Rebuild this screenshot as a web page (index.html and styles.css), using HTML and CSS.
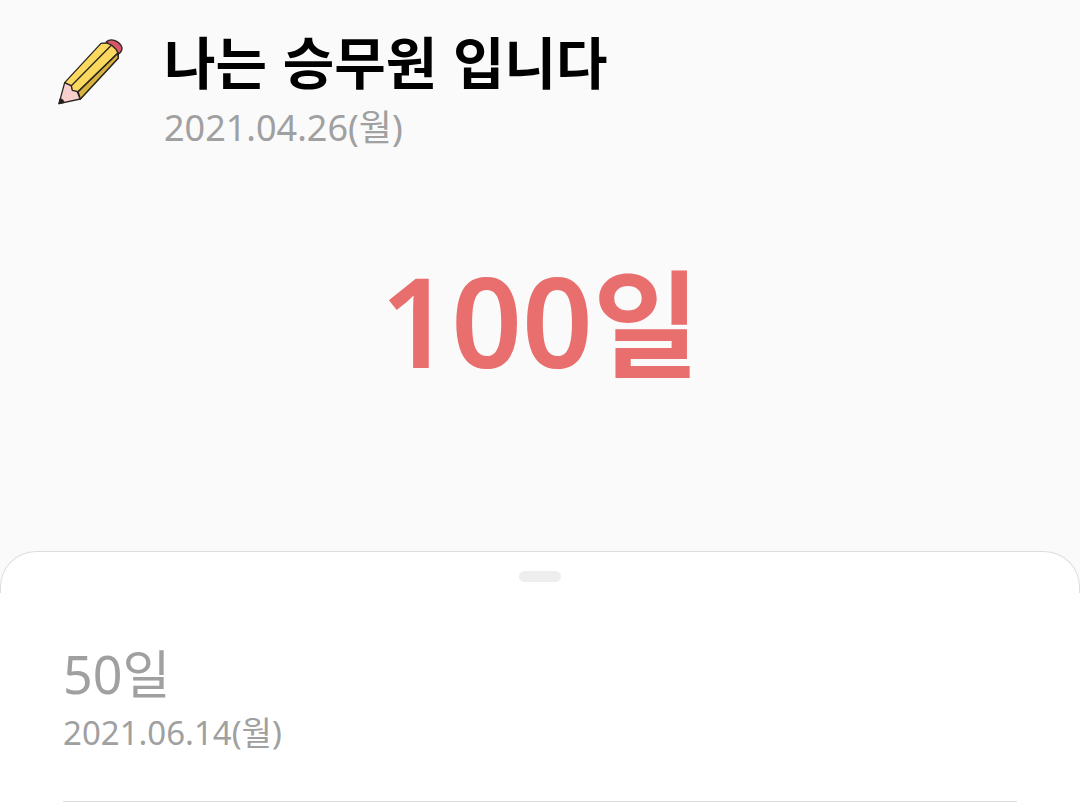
FILE: index.html
```html
<!DOCTYPE html>
<html lang="ko">
<head>
<meta charset="utf-8">
<meta name="viewport" content="width=device-width, initial-scale=1">
<title>나는 승무원 입니다</title>
<link rel="stylesheet" href="styles.css">
</head>
<body>
<main class="page">
  <header class="event">
    <svg class="event-icon" viewBox="33 33 216 216" aria-hidden="true">
      <g stroke="#2b2622" stroke-width="4" stroke-linejoin="round" stroke-linecap="round">
        <path d="M184 50 Q194 42 208 46 Q226 52 231 68 Q232 79 221 87 Z" fill="#d9566a"/>
        <path d="M59 173 L42 236 L106 222 L96 199 L82 193 L78 181 Z" fill="#f9cfce"/>
        <path d="M59 173 L168 55 L184 54 L199 60 L213 73 L220 86 L220 99 L106 222 L99 200 L82 196 L79 182 Z" fill="#fbd95f"/>
        <path d="M99 200 L218 85 L220 99 L106 222 Z" fill="#d8b23f"/>
        <path d="M79 182 L199 61 M99 200 L219 84" fill="none"/>
        <path d="M46 221 L42 236 L57 232 Q54 224 46 221 Z" fill="#1f1b1b"/>
      </g>
    </svg>
    <div class="event-text">
      <h1 class="event-title">나는 승무원 입니다</h1>
      <time class="event-date" datetime="2021-04-26">2021.04.26(월)</time>
    </div>
  </header>
  <p class="count">100<span class="count-unit">일</span></p>
  <section class="sheet">
    <div class="sheet-top">
      <button class="handle" type="button" aria-label="목록 펼치기"></button>
    </div>
    <ul class="milestones">
      <li class="milestone">
        <strong class="milestone-days">50일</strong>
        <time class="milestone-date" datetime="2021-06-14">2021.06.14(월)</time>
      </li>
    </ul>
  </section>
</main>
</body>
</html>
```

FILE: styles.css
```css
* { box-sizing: border-box; margin: 0; padding: 0; }
body { background: #fafafa; font-family: "Noto Sans", "Noto Sans CJK KR", sans-serif; }
.page { display: flex; flex-direction: column; min-height: 100vh; }
.event { display: flex; gap: 36px; padding: 24px 56px 0; }
.event-icon { flex: none; width: 72px; height: 72px; margin-top: 12px; }
.event-title { font-family: "Noto Sans CJK KR", sans-serif; font-size: 56px; line-height: 72px; font-weight: 700; color: #000; }
.event-date { display: block; margin-top: 8px; font-size: 36px; line-height: 48px; color: #a0a0a0; }
.count { padding-top: 84px; font-size: 124px; line-height: 168px; font-weight: 600; text-align: center; color: #e96f6f; }
.count-unit { font-size: 116px; line-height: 1; font-weight: 700; }
.sheet { flex: 1; margin-top: 147px; background: #fff; border-radius: 36px 36px 0 0; }
.sheet-top { height: 42px; padding-top: 19px; border: 1px solid #ddd; border-bottom: 0; border-radius: 36px 36px 0 0; }
.handle { display: block; width: 42px; height: 11px; margin: 0 auto; border: 0; border-radius: 6px; background: #eee; }
.milestones { list-style: none; padding: 44px 63px 0; }
.milestone { border-bottom: 1px solid #ddd; padding-bottom: 46px; }
.milestone-days { display: block; font-size: 52px; line-height: 74px; font-weight: 400; color: #a0a0a0; }
.milestone-date { display: block; font-size: 33px; line-height: 44px; color: #a0a0a0; }
```
